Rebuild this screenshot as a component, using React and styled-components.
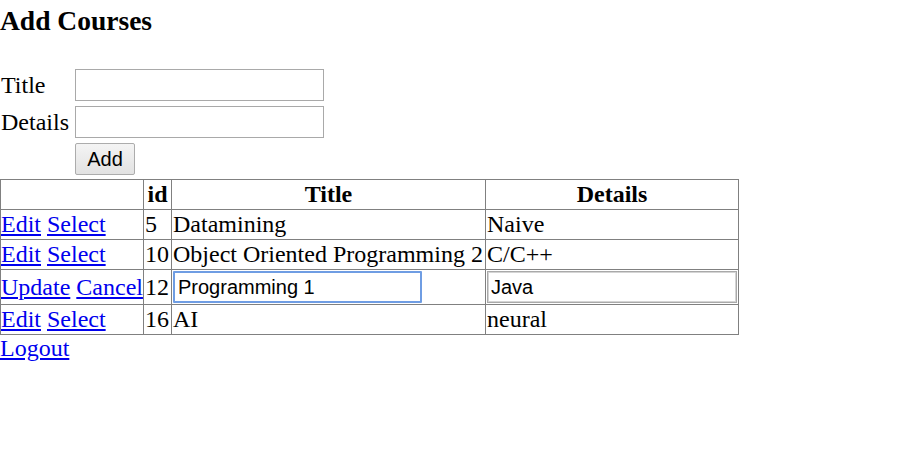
import React from 'react';
import styled, {createGlobalStyle} from 'styled-components';

const GlobalStyle = createGlobalStyle`
body {
  margin: 0;
  background: #fff;
  font-family: 'Liberation Serif', 'Times New Roman', serif;
  font-size: 24px;
  color: #000;
}
`;

const Heading = styled.h3`
margin: 5px 0 28px;
font-size: 27.5px;
font-weight: bold;
line-height: 32px;
`;

const FormTable = styled.table`
border-spacing: 2px 3px;
margin-left: -2px;
td {
  padding: 1px;
  vertical-align: middle;
}
`;

const Label = styled.td`
line-height: 27px;
`;

const InputCell = styled.td`
&& {
  padding-left: 3px;
}
`;

const TextBox = styled.input`
box-sizing: border-box;
width: ${props => props.$wide ? '250px' : '249px'};
height: 32px;
margin: 0;
padding: 1px 3px;
font-family: 'Liberation Sans', Arial, sans-serif;
font-size: 20px;
color: #000;
border: ${props => props.$focused ? '2px solid #6f9de3' : '1px solid #a9a9a9'};
box-shadow: ${props => props.$framed ? 'inset 0 0 0 1px #d4d4d4' : 'none'};
outline: none;
border-radius: ${props => props.$focused ? '1px' : '0'};
display: block;
`;

const Button = styled.button`
box-sizing: border-box;
width: 60px;
height: 32px;
margin: 0;
padding: 0;
font-family: 'Liberation Sans', Arial, sans-serif;
font-size: 20px;
color: #000;
background: linear-gradient(#f4f4f4, #e2e2e2);
border: 1px solid #acacac;
border-radius: 2px;
display: block;
`;

const Grid = styled.table`
border-collapse: collapse;
table-layout: fixed;
width: 738px;
th, td {
  border: 1px solid #808080;
  padding: 0 1px;
  height: 29px;
  line-height: 27px;
  white-space: nowrap;
}
td {
  text-align: left;
}
th {
  text-align: center;
  font-weight: bold;
}
`;

const ActionCell = styled.td`
&& {
  padding-left: 0;
}
`;

const EditCell = styled.td`
&& {
  padding: 1px;
  height: 32px;
}
`;

const Link = styled.a`
color: #0000ee;
text-decoration: underline;
cursor: pointer;
`;

const Logout = styled(Link)`
display: inline-block;
line-height: 27px;
`;

const rows = [
  {id: 5, title: 'Datamining', details: 'Naive'},
  {id: 10, title: 'Object Oriented Programming 2', details: 'C/C++'},
  {id: 12, title: 'Programming 1', details: 'Java', editing: true},
  {id: 16, title: 'AI', details: 'neural'},
];

export default function App() {
  return (
    <>
      <GlobalStyle/>
      <Heading>Add Courses</Heading>
      <FormTable>
        <tbody>
          <tr>
            <Label>Title</Label>
            <InputCell><TextBox type="text"/></InputCell>
          </tr>
          <tr>
            <Label>Details</Label>
            <InputCell><TextBox type="text"/></InputCell>
          </tr>
          <tr>
            <td></td>
            <InputCell><Button>Add</Button></InputCell>
          </tr>
        </tbody>
      </FormTable>
      <Grid>
        <colgroup>
          <col style={{width: 143}}/>
          <col style={{width: 28}}/>
          <col style={{width: 314}}/>
          <col style={{width: 253}}/>
        </colgroup>
        <thead>
          <tr>
            <th></th>
            <th>id</th>
            <th>Title</th>
            <th>Details</th>
          </tr>
        </thead>
        <tbody>
          {rows.map(row => row.editing ? (
            <tr key={row.id}>
              <ActionCell><Link>Update</Link> <Link>Cancel</Link></ActionCell>
              <td>{row.id}</td>
              <EditCell><TextBox type="text" defaultValue={row.title} $focused/></EditCell>
              <EditCell><TextBox type="text" defaultValue={row.details} $wide $framed/></EditCell>
            </tr>
          ) : (
            <tr key={row.id}>
              <ActionCell><Link>Edit</Link> <Link>Select</Link></ActionCell>
              <td>{row.id}</td>
              <td>{row.title}</td>
              <td>{row.details}</td>
            </tr>
          ))}
        </tbody>
      </Grid>
      <Logout>Logout</Logout>
    </>
  );
}
